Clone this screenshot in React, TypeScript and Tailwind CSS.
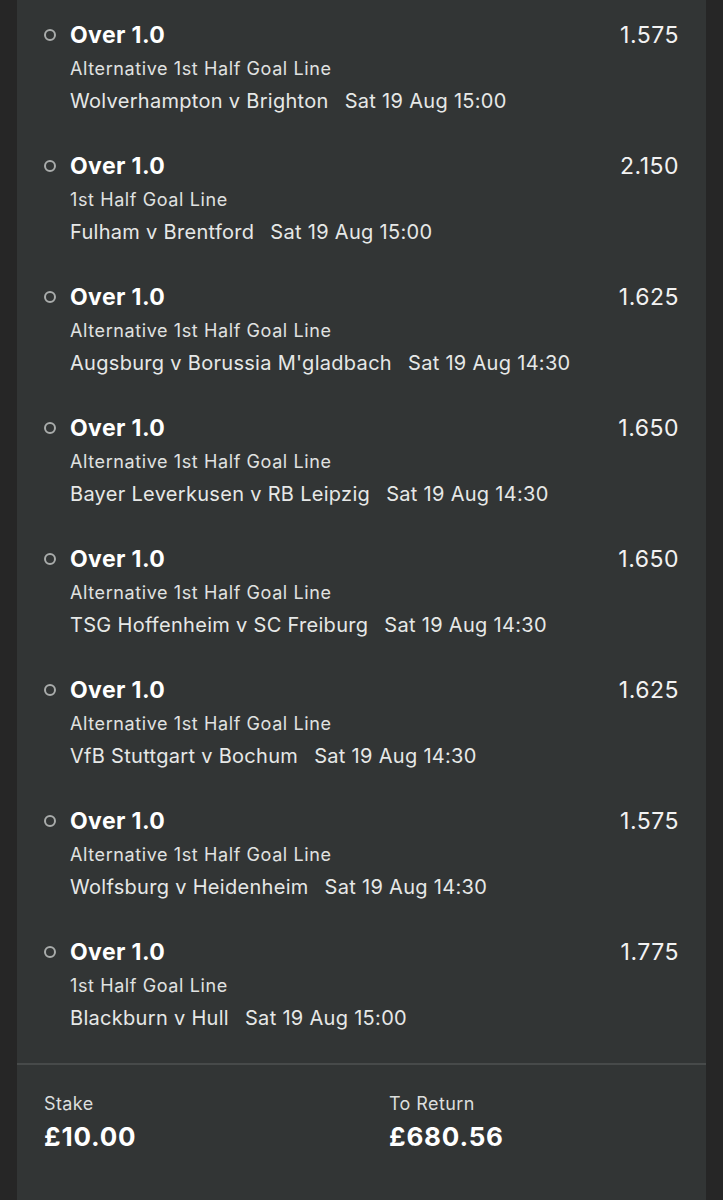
const selections = [
  { odds: '1.575', market: 'Alternative 1st Half Goal Line', event: 'Wolverhampton v Brighton', time: 'Sat 19 Aug 15:00' },
  { odds: '2.150', market: '1st Half Goal Line', event: 'Fulham v Brentford', time: 'Sat 19 Aug 15:00' },
  { odds: '1.625', market: 'Alternative 1st Half Goal Line', event: "Augsburg v Borussia M'gladbach", time: 'Sat 19 Aug 14:30' },
  { odds: '1.650', market: 'Alternative 1st Half Goal Line', event: 'Bayer Leverkusen v RB Leipzig', time: 'Sat 19 Aug 14:30' },
  { odds: '1.650', market: 'Alternative 1st Half Goal Line', event: 'TSG Hoffenheim v SC Freiburg', time: 'Sat 19 Aug 14:30' },
  { odds: '1.625', market: 'Alternative 1st Half Goal Line', event: 'VfB Stuttgart v Bochum', time: 'Sat 19 Aug 14:30' },
  { odds: '1.575', market: 'Alternative 1st Half Goal Line', event: 'Wolfsburg v Heidenheim', time: 'Sat 19 Aug 14:30' },
  { odds: '1.775', market: '1st Half Goal Line', event: 'Blackburn v Hull', time: 'Sat 19 Aug 15:00' },
]

function Selection({ odds, market, event, time }: (typeof selections)[number]) {
  return (
    <div className="h-[131px] pt-[21px] pl-[27px] pr-[27px]">
      <div className="flex items-center h-[28px]">
        <span className="w-[12px] h-[12px] rounded-full border-2 border-[#a9acab] shrink-0" />
        <span className="ml-[14px] text-[23px] font-bold text-white tracking-[0.4px]">Over 1.0</span>
        <span className="ml-auto text-[23px] text-[#f2f2f2] tracking-[0.5px]">{odds}</span>
      </div>
      <div className="ml-[26px] mt-[8px] h-[24px] leading-[24px] text-[18px] text-[#e0e2e1] tracking-[0.6px]">
        {market}
      </div>
      <div className="ml-[26px] mt-[7px] h-[26px] leading-[26px] text-[20px] text-[#e6e8e7] tracking-[0.3px] flex gap-[16px]">
        <span>{event}</span>
        <span>{time}</span>
      </div>
    </div>
  )
}

export default function App() {
  return (
    <div className="min-h-[1200px] bg-[#262626] px-[17px] font-['Inter','Liberation_Sans',sans-serif]">
      <div className="min-h-[1200px] bg-[#323535]">
        <div className="pb-[15px]">
          {selections.map((s, i) => (
            <Selection key={i} {...s} />
          ))}
        </div>
        <div className="h-[2px] bg-[#474a4a]" />
        {/* totals */}
        <div className="flex pt-[27px] pl-[27px]">
          <div className="w-[345px]">
            <div className="text-[18px] leading-[24px] text-[#dcdedd] tracking-[0.4px]">Stake</div>
            <div className="mt-[6px] text-[26px] leading-[30px] font-bold text-white tracking-[0.8px]">£10.00</div>
          </div>
          <div>
            <div className="text-[18px] leading-[24px] text-[#dcdedd] tracking-[0.4px]">To Return</div>
            <div className="mt-[6px] text-[26px] leading-[30px] font-bold text-white tracking-[0.8px]">£680.56</div>
          </div>
        </div>
      </div>
    </div>
  )
}
